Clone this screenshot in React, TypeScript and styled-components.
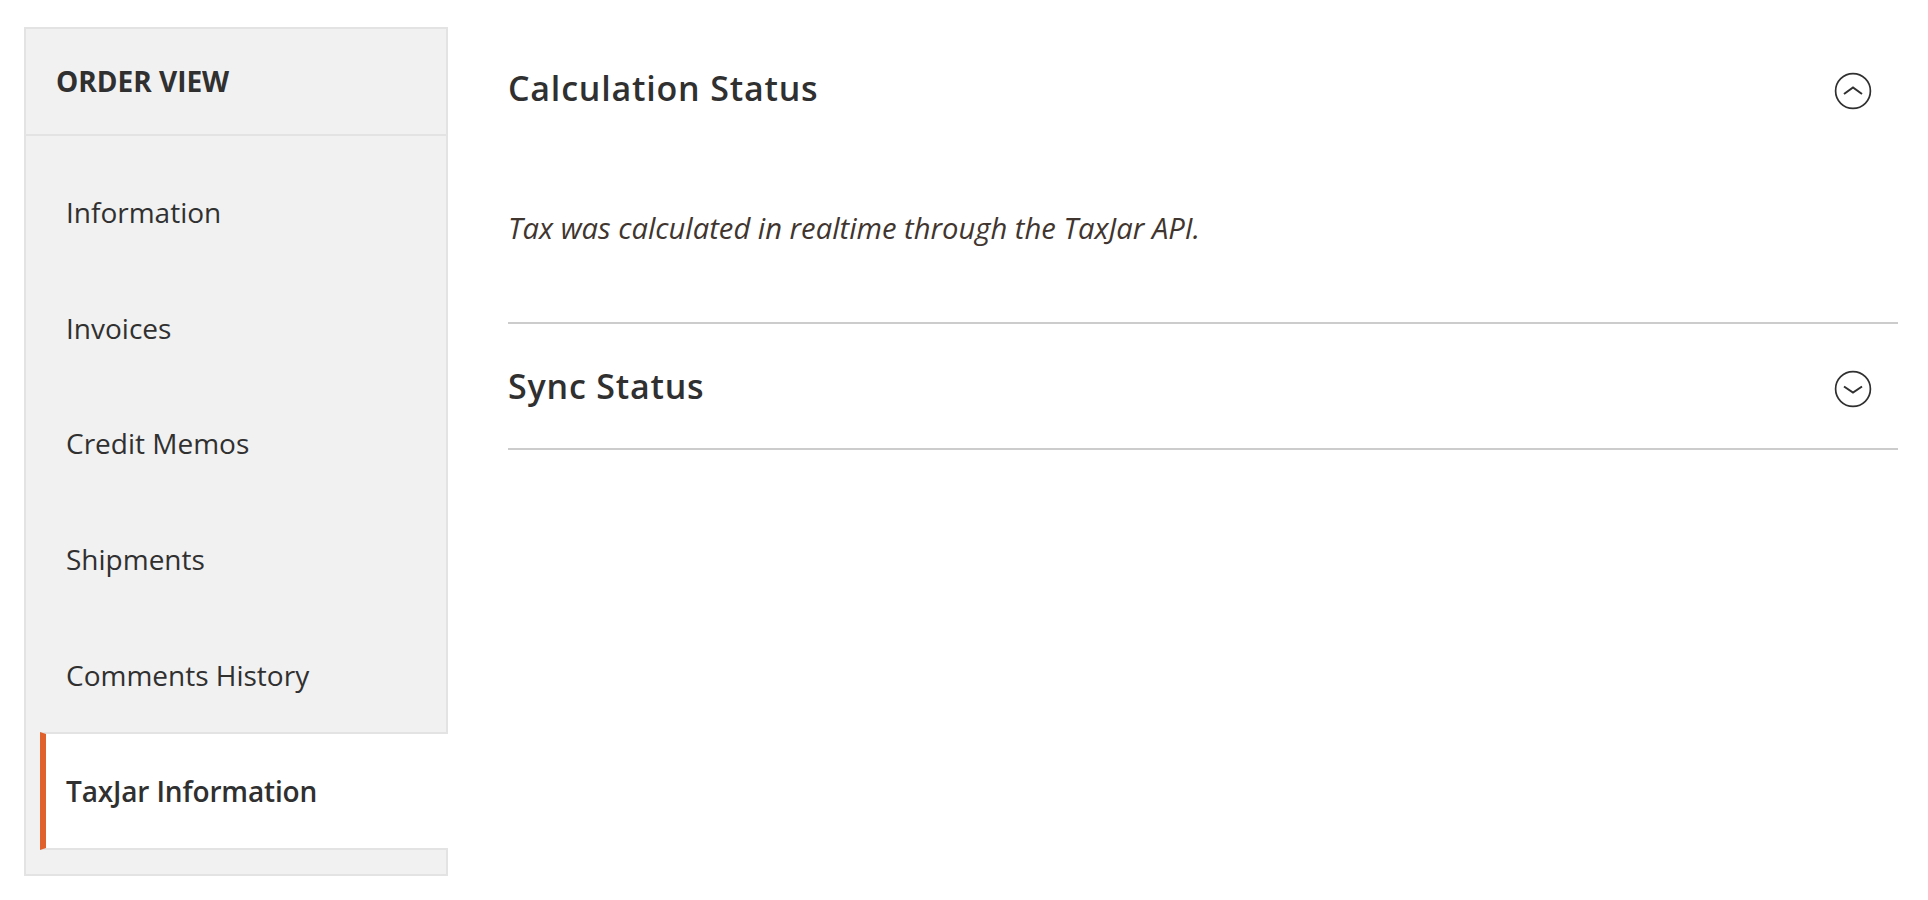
import React from "react";
import styled, { createGlobalStyle } from "styled-components";

const Global = createGlobalStyle`
  html, body { margin: 0; padding: 0; background: #fff; }
  body { font-family: "Open Sans", "Noto Sans", sans-serif; color: #303030; }
`;

const Page = styled.div`
  display: flex;
  align-items: flex-start;
  padding: 27px 30px 0 24px;
  height: 900px;
  box-sizing: border-box;
  overflow: hidden;
`;

const Sidebar = styled.aside`
  width: 424px;
  flex: none;
  box-sizing: border-box;
  background: #f1f1f1;
  border: 2px solid #e3e3e3;
  padding-bottom: 24px;
`;

const SidebarTitle = styled.h2`
  margin: 0 0 18.4px;
  height: 107px;
  box-sizing: border-box;
  display: flex;
  align-items: center;
  padding: 0 0 2px 30px;
  font-size: 28px;
  font-weight: 700;
  border-bottom: 2px solid #e3e3e3;
`;

const NavList = styled.ul`
  list-style: none;
  margin: 0;
  padding: 0;
`;

const NavItem = styled.li<{ $active?: boolean }>`
  height: 115.6px;
  box-sizing: border-box;
  display: flex;
  align-items: center;
  padding-left: 40px;
  font-size: 28px;
  font-weight: ${(p) => (p.$active ? 600 : 400)};
  ${(p) =>
    p.$active &&
    `
    margin: 0 -2px 0 14px;
    padding-left: 20px;
    height: 118px;
    letter-spacing: -0.15px;
    background: #fff;
    border-left: 6px solid #e0612b;
    border-top: 2px solid #e3e3e3;
    border-bottom: 2px solid #e3e3e3;
  `}
`;

const Main = styled.main`
  flex: 1;
  min-width: 0;
  margin-left: 60px;
`;

const Section = styled.section`
  border-bottom: 2px solid #cccccc;
`;

const SectionHead = styled.div<{ $h: number }>`
  height: ${(p) => p.$h}px;
  display: flex;
  align-items: center;
  justify-content: space-between;
  padding-right: 26px;
`;

const SectionTitle = styled.h3`
  margin: 0;
  font-size: 34px;
  font-weight: 600;
  letter-spacing: 0.8px;
`;

const Note = styled.p`
  margin: 0;
  padding: 59px 0 74px;
  font-size: 29.2px;
  font-style: italic;
  color: #41362f;
  line-height: 40px;
`;

const ChevronIcon = styled.svg`
  margin-top: 6px;
  flex: none;
`;

const Chevron = ({ up }: { up?: boolean }) => (
  <ChevronIcon width="38" height="38" viewBox="0 0 38 38" fill="none" stroke="#303030">
    <circle cx="19" cy="19" r="17.4" strokeWidth="1.7" />
    <path d={up ? "M10 22 L19 15.5 L28 22" : "M10 16.5 L19 22.5 L28 16.5"} strokeWidth="2" />
  </ChevronIcon>
);

export default function App() {
  const items = ["Information", "Invoices", "Credit Memos", "Shipments", "Comments History"];
  return (
    <>
      <Global />
      <Page>
        <Sidebar>
          <SidebarTitle>ORDER VIEW</SidebarTitle>
          <NavList>
            {items.map((t) => (
              <NavItem key={t}>{t}</NavItem>
            ))}
            <NavItem $active>TaxJar Information</NavItem>
          </NavList>
        </Sidebar>
        <Main>
          <Section>
            <SectionHead $h={122}>
              <SectionTitle>Calculation Status</SectionTitle>
              <Chevron up />
            </SectionHead>
            <Note>Tax was calculated in realtime through the TaxJar API.</Note>
          </Section>
          <Section>
            <SectionHead $h={124}>
              <SectionTitle>Sync Status</SectionTitle>
              <Chevron />
            </SectionHead>
          </Section>
        </Main>
      </Page>
    </>
  );
}
